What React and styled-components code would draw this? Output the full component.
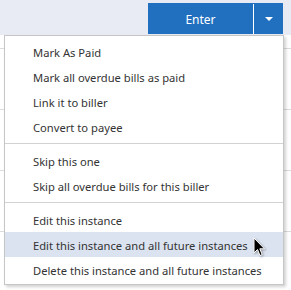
import React from "react";
import styled, { createGlobalStyle } from "styled-components";

const GlobalStyle = createGlobalStyle`
  html, body {
    margin: 0;
    padding: 0;
    background: #ffffff;
  }
  body {
    font-family: "Noto Sans", "Open Sans", Arial, sans-serif;
    color: #333333;
  }
`;

const Page = styled.div`
  position: relative;
  width: 291px;
  height: 290px;
  overflow: hidden;
  background: #ffffff;
`;

const Header = styled.div`
  height: 35px;
  background: #e8ebf3;
  display: flex;
  justify-content: flex-end;
  align-items: flex-start;
  padding: 3px 8px 0 0;
  box-sizing: border-box;
`;

const SplitButton = styled.div`
  display: flex;
  height: 31px;
  background: #2170c0;
  color: #ffffff;
`;

const MainPart = styled.div`
  width: 105px;
  display: flex;
  align-items: center;
  justify-content: center;
  font-size: 12px;
  border-right: 1px solid #ffffff;
  margin-top: 1px;
  padding-top: 1px;
`;

const ArrowPart = styled.div`
  width: 29px;
  display: flex;
  align-items: center;
  justify-content: center;
`;

const Caret = styled.span`
  width: 0;
  height: 0;
  border-left: 4px solid transparent;
  border-right: 4px solid transparent;
  border-top: 4px solid #ffffff;
`;

const Rows = styled.div`
  display: flex;
  flex-direction: column;
`;

const Row = styled.div`
  height: ${(p) => p.h}px;
  border-bottom: 1px solid #dcdcdc;
  box-sizing: border-box;
`;

const Menu = styled.div`
  position: absolute;
  left: 4px;
  top: 35px;
  width: 280px;
  box-sizing: border-box;
  background: #ffffff;
  border: 1px solid #c6c6c6;
  box-shadow: 2px 2px 3px rgba(0, 0, 0, 0.18);
  padding: 3px 0 2px;
`;

const Item = styled.div`
  height: 25px;
  box-sizing: border-box;
  display: flex;
  align-items: center;
  padding: 1px 0 0 28px;
  font-size: 11.2px;
  color: #333333;
  white-space: nowrap;
  background: ${(p) => (p.active ? "#dce3f0" : "transparent")};
`;

const Separator = styled.div`
  height: 1px;
  background: #d2d2d2;
  margin: 4px 0;
`;

const Cursor = styled.svg`
  position: absolute;
  left: 253px;
  top: 237px;
  filter: drop-shadow(1px 1px 1px rgba(0, 0, 0, 0.35));
`;

const groups = [
  ["Mark As Paid", "Mark all overdue bills as paid", "Link it to biller", "Convert to payee"],
  ["Skip this one", "Skip all overdue bills for this biller"],
  [
    "Edit this instance",
    "Edit this instance and all future instances",
    "Delete this instance and all future instances",
  ],
];

export default function App() {
  return (
    <Page>
      <GlobalStyle />
      <Header>
        <SplitButton>
          <MainPart>Enter</MainPart>
          <ArrowPart>
            <Caret />
          </ArrowPart>
        </SplitButton>
      </Header>
      <Rows>
        <Row h={14} />
        <Row h={61} />
        <Row h={61} />
        <Row h={61} />
      </Rows>
      <Menu>
        {groups.map((g, gi) => (
          <React.Fragment key={gi}>
            {gi > 0 && <Separator />}
            {g.map((label) => (
              <Item key={label} active={label === "Edit this instance and all future instances"}>
                {label}
              </Item>
            ))}
          </React.Fragment>
        ))}
      </Menu>
      <Cursor width="13" height="20" viewBox="0 0 13 20">
        <path
          d="M1 1 L1 16 L4.5 12.5 L7 18.5 L9.2 17.6 L6.8 11.8 L11.5 11.8 Z"
          fill="#000000"
          stroke="#ffffff"
          strokeWidth="1"
          strokeLinejoin="miter"
        />
      </Cursor>
    </Page>
  );
}
